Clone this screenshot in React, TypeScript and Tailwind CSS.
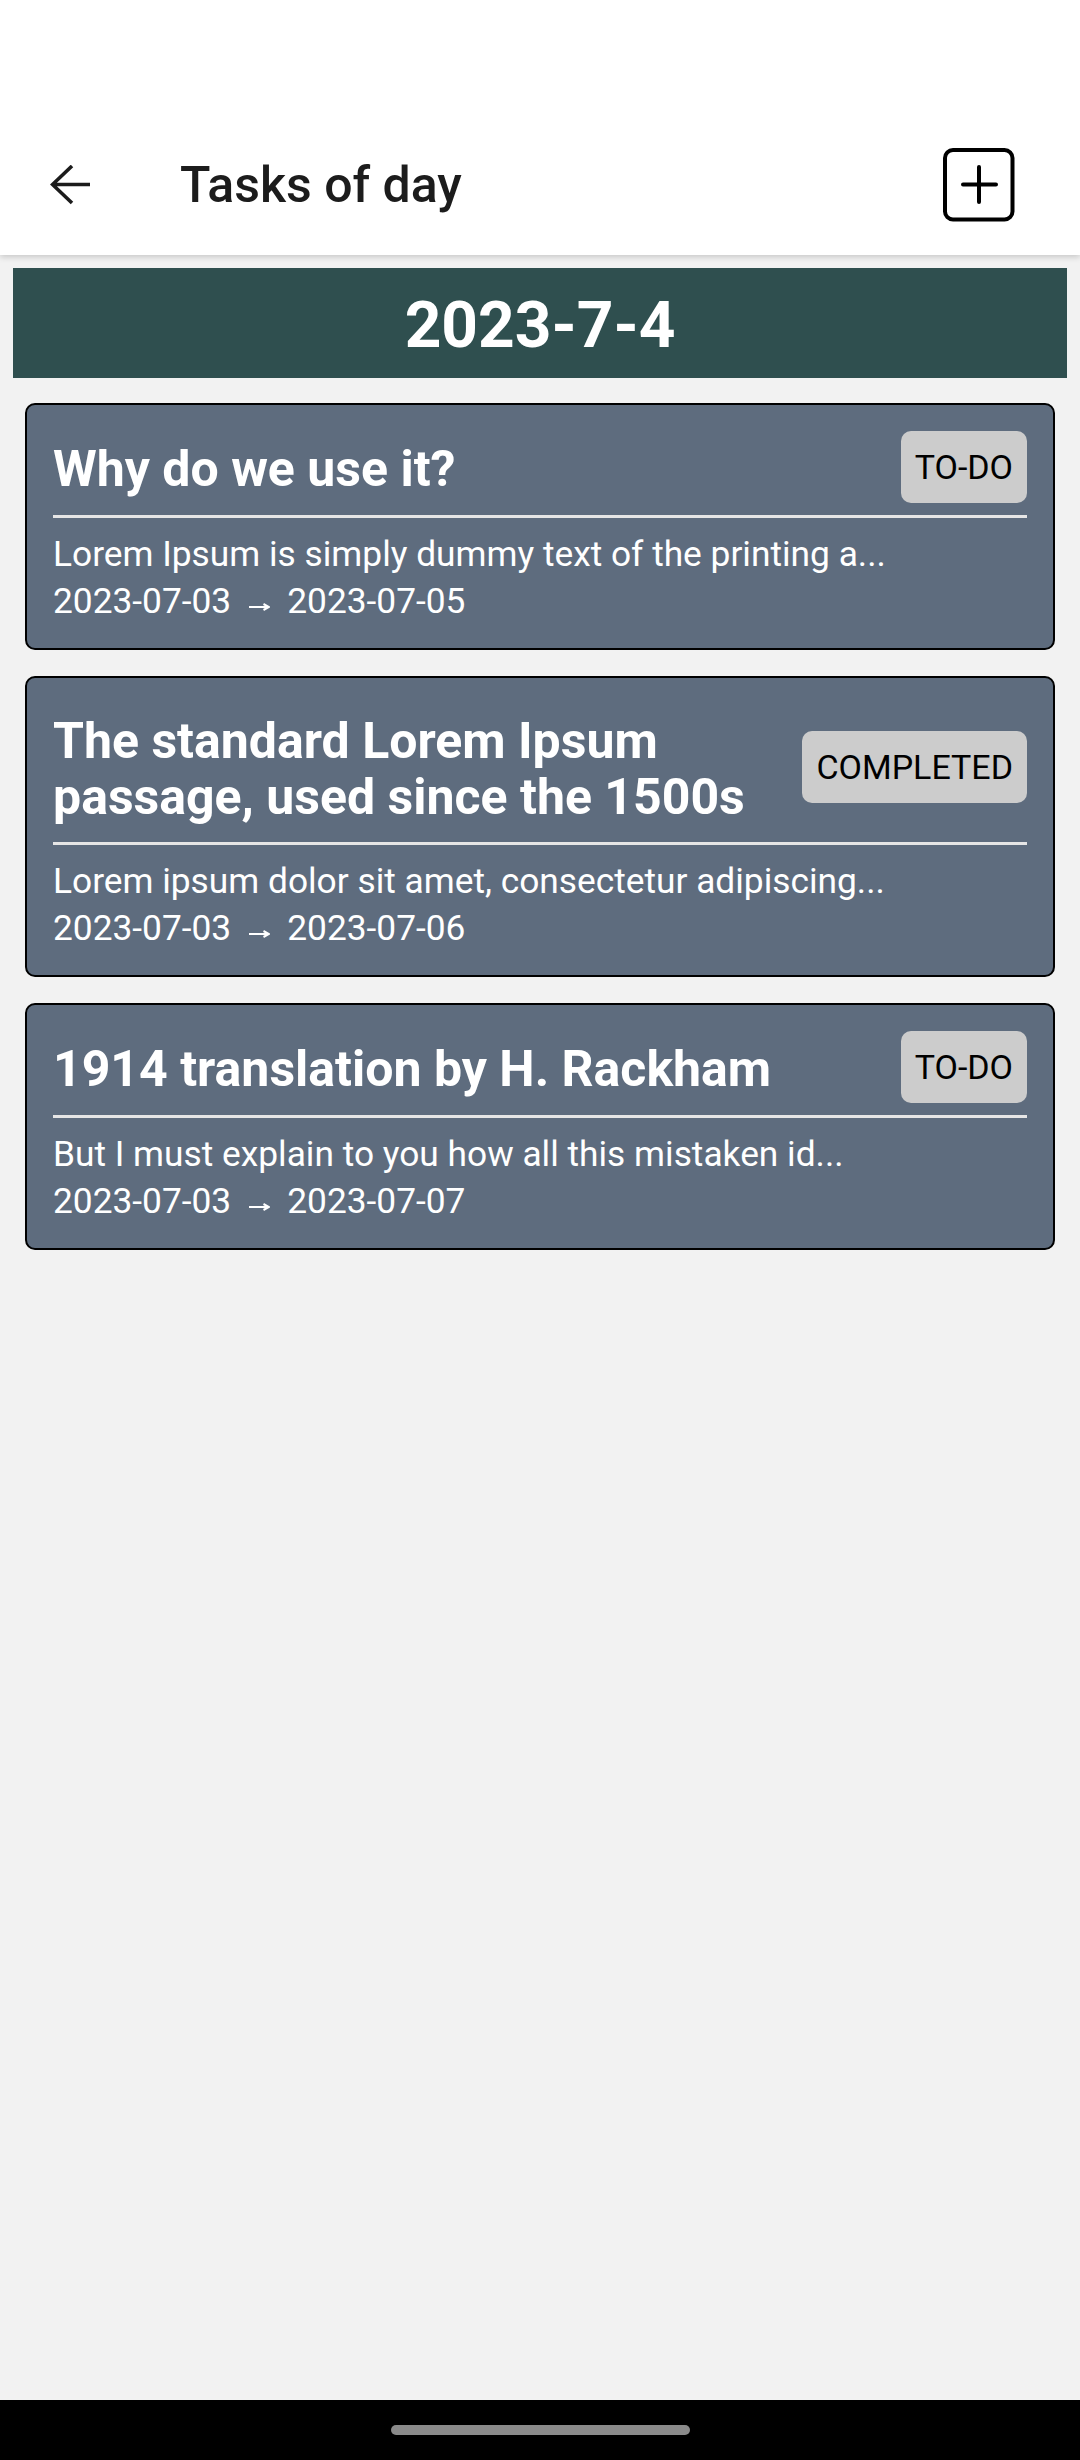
const tasks = [
  {
    title: "Why do we use it?",
    desc: "Lorem Ipsum is simply dummy text of the printing a...",
    start: "2023-07-03",
    end: "2023-07-05",
    status: "TO-DO",
  },
  {
    title: "The standard Lorem Ipsum passage, used since the 1500s",
    desc: "Lorem ipsum dolor sit amet, consectetur adipiscing...",
    start: "2023-07-03",
    end: "2023-07-06",
    status: "COMPLETED",
  },
  {
    title: "1914 translation by H. Rackham",
    desc: "But I must explain to you how all this mistaken id...",
    start: "2023-07-03",
    end: "2023-07-07",
    status: "TO-DO",
  },
]

function TaskCard({ task }: { task: (typeof tasks)[number] }) {
  return (
    <div className="mx-[25px] rounded-[10px] border-2 border-black bg-[#5e6c7e] px-[26px] pt-[26px] pb-[23px]">
      <div className="flex items-center gap-6">
        <h2 className="flex-1 pt-[9px] pb-[5px] text-[50px] leading-[56px] font-bold text-white">{task.title}</h2>
        <span className="flex h-[72px] items-center rounded-[10px] bg-[#cccccc] px-[14px] text-[34px] text-black">
          {task.status}
        </span>
      </div>
      <div className="mt-[12px] h-[3px] bg-[#e6e6e6]" />
      <p className="mt-[13px] text-[35.3px] leading-[47px] text-white">{task.desc}</p>
      <p className="text-[35.3px] leading-[47px] text-white">
        {task.start}
        <svg className="mr-[17px] ml-[18px] inline-block align-[2px]" width="21" height="8" viewBox="0 0 21 8" fill="none">
          <path d="M0 4 H20 M14.5 1 L20 4 L14.5 7" stroke="white" strokeWidth="2" />
        </svg>
        {task.end}
      </p>
    </div>
  )
}

export default function App() {
  return (
    <div className="flex h-[2460px] w-[1080px] flex-col overflow-hidden bg-[#f2f2f2] font-['Roboto',sans-serif]">
      <header className="relative z-10 bg-white shadow-[0_2px_6px_rgba(0,0,0,0.18)]">
        <div className="h-[115px]" />
        <div className="flex h-[140px] items-center">
          <svg className="ml-[50px]" width="42" height="40" viewBox="0 0 42 40" fill="none">
            <path d="M22 1 L2.5 19.5 L22 38 M2.5 19.5 H40" stroke="#1c1c1c" strokeWidth="3.6" />
          </svg>
          <h1 className="ml-[88px] text-[50px] font-medium text-[#1c1c1c]">Tasks of day</h1>
          <svg className="mr-[65px] ml-auto" width="72" height="74" viewBox="0 0 72 74" fill="none">
            <rect x="2" y="2" width="67.5" height="69.5" rx="8" stroke="#000" strokeWidth="4" />
            <path d="M20 36.5 H53 M36 19 V54" stroke="#000" strokeWidth="4" strokeLinecap="round" />
          </svg>
        </div>
      </header>

      <main className="flex-1">
        <div className="mx-[13px] mt-[13px] flex h-[110px] items-center justify-center bg-[#2f4f4f] pt-[5px]">
          <span className="text-[64px] font-bold text-white">2023-7-4</span>
        </div>
        <div className="mt-[25px] flex flex-col gap-[26px]">
          {tasks.map((t) => (
            <TaskCard key={t.title} task={t} />
          ))}
        </div>
      </main>

      <div className="flex h-[60px] items-center justify-center bg-black">
        <div className="h-[10px] w-[299px] rounded-full bg-[#8a8a8a]" />
      </div>
    </div>
  )
}
